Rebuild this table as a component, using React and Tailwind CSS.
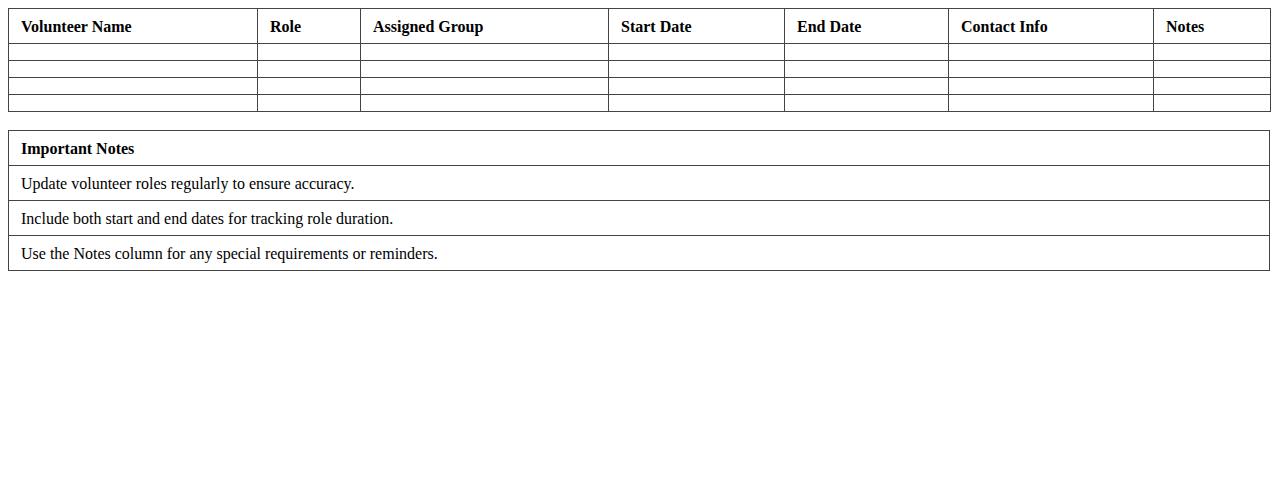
const columns = [
  { label: "Volunteer Name", w: "w-[249px]" },
  { label: "Role", w: "w-[103px]" },
  { label: "Assigned Group", w: "w-[248px]" },
  { label: "Start Date", w: "w-[176px]" },
  { label: "End Date", w: "w-[164px]" },
  { label: "Contact Info", w: "w-[205px]" },
  { label: "Notes", w: "w-[117px]" },
];

const notes = [
  "Update volunteer roles regularly to ensure accuracy.",
  "Include both start and end dates for tracking role duration.",
  "Use the Notes column for any special requirements or reminders.",
];

export default function App() {
  return (
    <div className="p-2 bg-white text-black font-['Liberation_Serif',serif] text-base leading-[18px]">
      {/* volunteer table */}
      <table className="w-full table-fixed border-collapse mb-[18px]">
        <thead>
          <tr>
            {columns.map((c) => (
              <th
                key={c.label}
                className={`${c.w} border border-[#444] px-3 pt-[9px] pb-[7px] text-left font-bold`}
              >
                {c.label}
              </th>
            ))}
          </tr>
        </thead>
        <tbody>
          {[0, 1, 2, 3].map((r) => (
            <tr key={r}>
              {columns.map((c) => (
                <td key={c.label} className="border border-[#444] px-3 py-2"></td>
              ))}
            </tr>
          ))}
        </tbody>
      </table>

      {/* notes */}
      <table className="w-full border-collapse">
        <thead>
          <tr>
            <th className="border border-[#444] px-3 pt-[9px] pb-[7px] text-left font-bold">Important Notes</th>
          </tr>
        </thead>
        <tbody>
          {notes.map((n) => (
            <tr key={n}>
              <td className="border border-[#444] px-3 pt-[9px] pb-[7px]">{n}</td>
            </tr>
          ))}
        </tbody>
      </table>
    </div>
  );
}
